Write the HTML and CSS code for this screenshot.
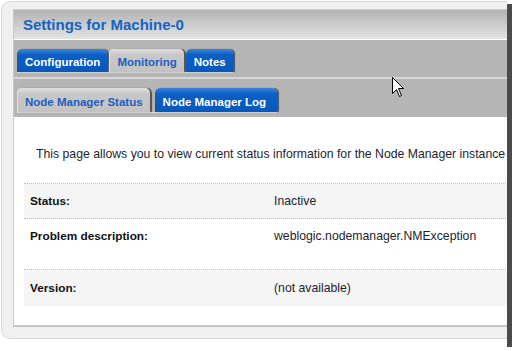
FILE: index.html
```html
<!DOCTYPE html>
<html>
<head>
<meta charset="utf-8">
<link rel="stylesheet" href="styles.css">
</head>
<body>
<div class="shot">
  <div class="frame">
    <div class="panel">
      <div class="header"><h1 class="title">Settings for Machine-0</h1></div>
      <div class="band band-top">
        <div class="tabs">
          <span class="tab tab-blue">Configuration</span>
          <span class="tab tab-gray">Monitoring</span>
          <span class="tab tab-blue">Notes</span>
        </div>
      </div>
      <div class="band band-sub">
        <div class="tabs">
          <span class="tab tab-gray tab-tight">Node Manager Status</span>
          <span class="tab tab-blue tab-wide">Node Manager Log</span>
        </div>
      </div>
      <div class="content">
        <p class="intro">This page allows you to view current status information for the Node Manager instance</p>
        <div class="props">
          <div class="row shaded"><div class="label">Status:</div><div class="value">Inactive</div></div>
          <div class="row tall"><div class="label">Problem description:</div><div class="value">weblogic.nodemanager.NMException</div></div>
          <div class="row shaded last"><div class="label">Version:</div><div class="value">(not available)</div></div>
        </div>
      </div>
    </div>
  </div>
  <svg class="cursor" width="13" height="21" viewBox="0 0 13 21">
    <path d="M0.5 0.5 L0.5 16.5 L4.5 12.5 L7.5 19.5 L9.5 18.5 L6.5 11.5 L11.5 11.5 Z" fill="#fff" stroke="#000" stroke-width="1" stroke-linejoin="miter"/>
  </svg>
</div>
</body>
</html>
```

FILE: styles.css
```css
html, body {
  margin: 0;
  background: #fff;
}
body {
  font-family: "Liberation Sans", Arial, sans-serif;
}
.shot {
  position: relative;
  width: 507px;
  height: 347px;
  background: #fff;
  box-shadow: 5px 4px 0 #4b4b4b;
}
.frame {
  box-sizing: border-box;
  position: relative;
  top: 1px;
  left: 1px;
  width: 506px;
  height: 338px;
  background: #f0f0f0;
  border: 1px solid #d9d9d9;
  border-right: 0;
  border-radius: 9px 0 0 9px;
  padding: 7px 0 11px 11px;
  display: flex;
}
.panel {
  flex: 1;
  min-width: 0;
  display: flex;
  flex-direction: column;
  background: #fff;
  border-left: 1px solid #c9c9c9;
  border-top: 1px solid #d2d2d2;
  border-bottom: 2px solid #c6c6c6;
  overflow: hidden;
}
.header {
  height: 29px;
  background: linear-gradient(#b3b3b3, #e4e4e4);
  border-bottom: 1px solid #fff;
  padding-left: 9px;
  display: flex;
  align-items: center;
}
.title {
  margin: 0;
  font-size: 15px;
  font-weight: bold;
  line-height: 18px;
  color: #1464c6;
}
.band {
  background: #b5b5b5;
  padding: 9px 0 4px 3px;
}
.band-top {
  border-bottom: 2px solid #d6d6d6;
}
.tabs {
  display: inline-flex;
  align-items: flex-end;
  gap: 2px;
  border-bottom: 1px solid #d9d9d9;
}
.tab {
  box-sizing: border-box;
  display: flex;
  align-items: center;
  padding: 3px 7px 0 8px;
  font-size: 11.5px;
  font-weight: bold;
  line-height: 14px;
  border-radius: 5px 5px 0 0;
  box-shadow: 2px 0 1px rgba(0, 0, 0, 0.55);
  white-space: nowrap;
}
.tab-tight {
  padding-right: 7px;
}
.tab-wide {
  padding-right: 11px;
}
.band-top .tab {
  height: 23px;
}
.band-sub .tab {
  height: 24px;
}
.band-sub .tabs {
  gap: 5px;
}
.tab-blue {
  background: linear-gradient(#3a86dc, #0b5fc4 25%, #0858bc);
  color: #fff;
}
.tab-gray {
  background: linear-gradient(#dedede, #c8c8c8 25%, #c2c2c2);
  color: #1c5fbe;
  box-shadow: inset 1px 0 0 #e2e2e2, 2px 0 1px rgba(0, 0, 0, 0.55);
}
.content {
  flex: 1;
  padding: 30px 0 0 10px;
  color: #1e1e2e;
  font-size: 12.25px;
}
.intro {
  margin: 0 0 21px 12px;
  line-height: 15px;
  white-space: nowrap;
}
.props {
  border-top: 1px dotted #bdbdbd;
  width: 600px;
}
.row {
  display: grid;
  grid-template-columns: 244px 1fr;
  border-bottom: 1px dotted #bdbdbd;
}
.row.last {
  border-bottom: 0;
}
.shaded {
  background: #f5f5f5;
}
.row > div {
  padding: 10px 6px 9px;
  line-height: 15px;
}
.row.tall > div {
  padding-bottom: 25px;
}
.row.last > div {
  padding: 11px 6px 10px;
}
.label {
  font-weight: bold;
  font-size: 11.8px;
  color: #111;
}
.value {
  color: #1e1e2e;
}
.cursor {
  position: absolute;
  left: 392px;
  top: 77px;
}
```
